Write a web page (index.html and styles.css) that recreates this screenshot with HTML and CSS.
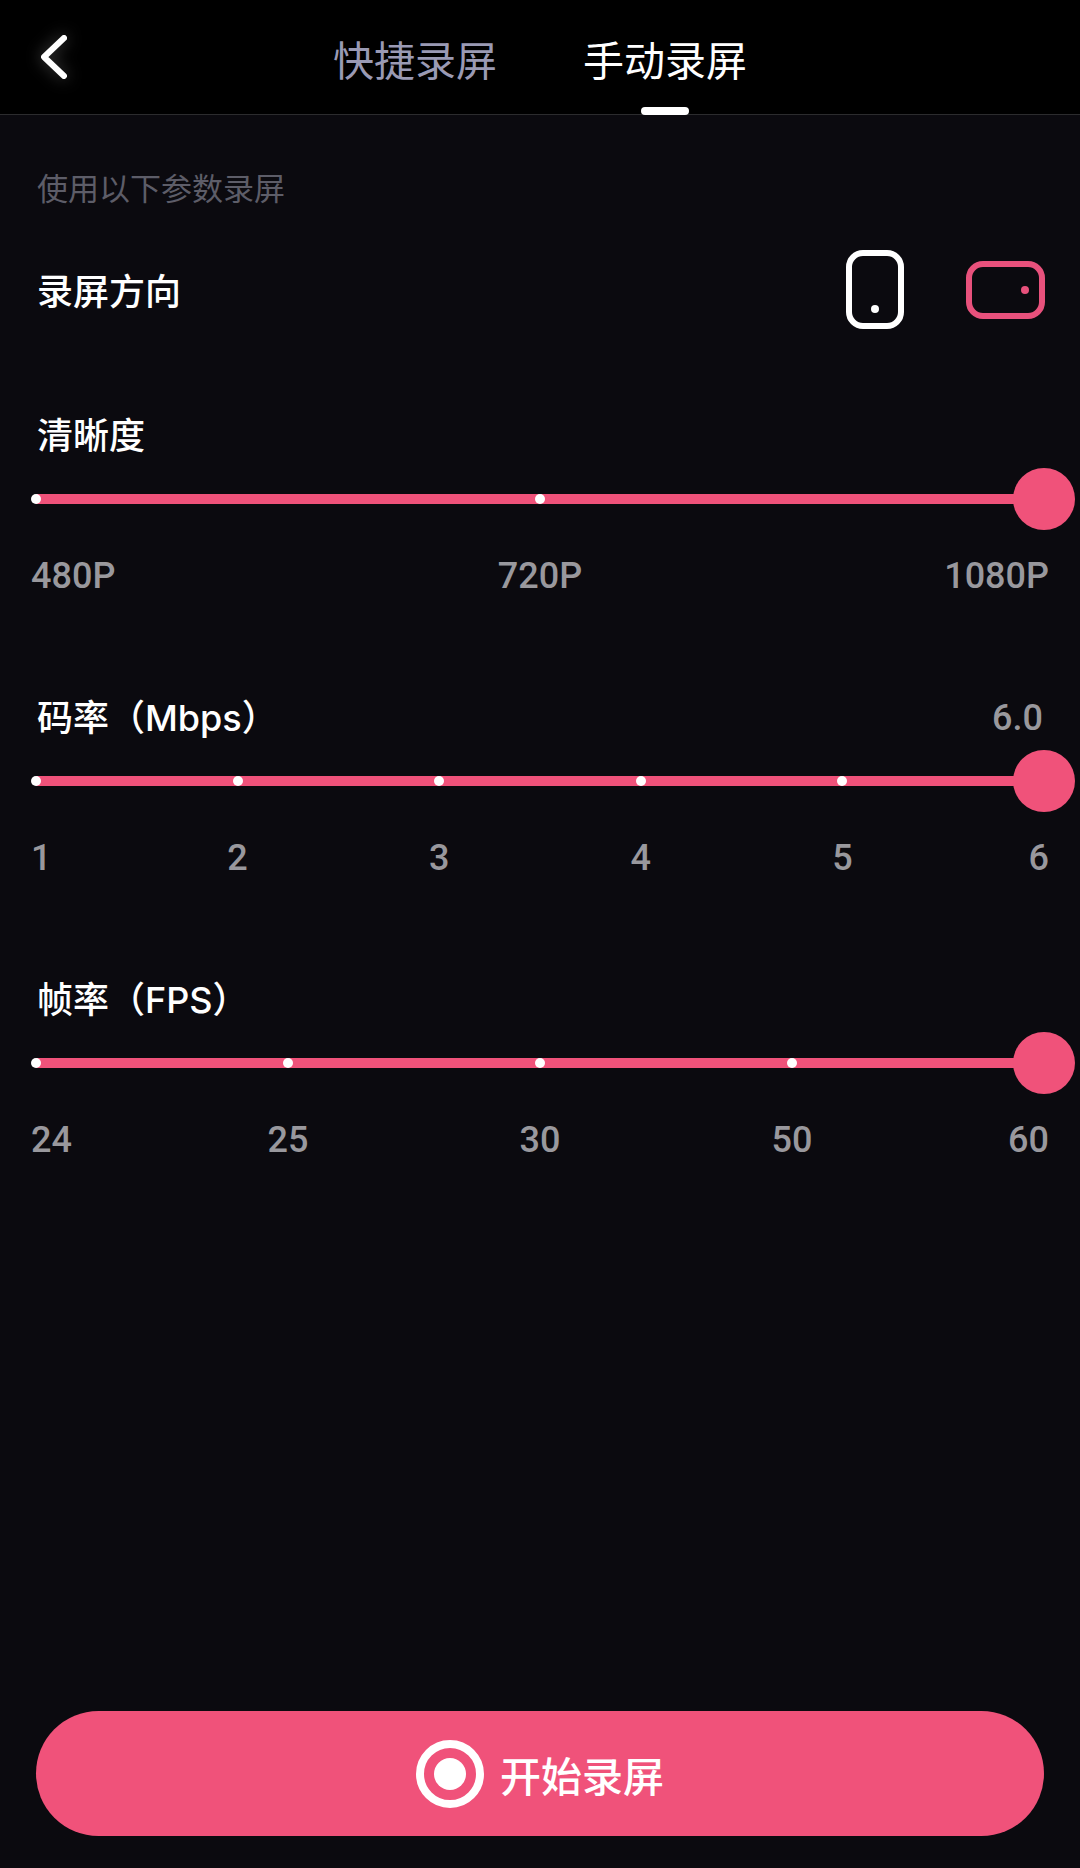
FILE: index.html
```html
<!DOCTYPE html>
<html lang="zh-CN">
<head>
    <meta charset="UTF-8">
    <meta name="viewport" content="width=device-width, initial-scale=1.0">
    <title>手动录屏</title>
    <link rel="stylesheet" href="styles.css">
</head>
<body>
    <header class="header">
        <button class="back" type="button" aria-label="返回">
            <svg width="32" height="48" viewBox="0 0 32 48" fill="none" stroke="#fff" stroke-width="6" stroke-linecap="round" stroke-linejoin="round">
                <path d="M28 5L8 24L28 43"/>
            </svg>
        </button>
        <nav class="tabs">
            <button class="tab" type="button">快捷录屏</button>
            <button class="tab active" type="button">手动录屏</button>
        </nav>
    </header>
    <main class="main">
        <p class="hint">使用以下参数录屏</p>
        <div class="direction">
            <span class="label">录屏方向</span>
            <div class="options" role="radiogroup" aria-label="录屏方向">
                <label class="option">
                    <input type="radio" name="direction" value="portrait" aria-label="竖屏">
                    <svg width="58" height="80" viewBox="0 0 58 80">
                        <rect x="3" y="3" width="52" height="73" rx="14" fill="none" stroke="currentColor" stroke-width="6"/>
                        <circle cx="29" cy="59" r="4" fill="currentColor"/>
                    </svg>
                </label>
                <label class="option">
                    <input type="radio" name="direction" value="landscape" aria-label="横屏" checked>
                    <svg width="80" height="58" viewBox="0 0 80 58">
                        <rect x="4" y="3" width="73" height="52" rx="14" fill="none" stroke="currentColor" stroke-width="6"/>
                        <circle cx="60" cy="29" r="4" fill="currentColor"/>
                    </svg>
                </label>
            </div>
        </div>

        <section class="setting">
            <div class="setting-head">
                <label class="label" for="quality">清晰度</label>
            </div>
            <div class="slider">
                <div class="track"><i></i><i></i><i></i></div>
                <input type="range" id="quality" min="0" max="2" step="1" value="2">
            </div>
            <div class="scale"><span>480P</span><span>720P</span><span>1080P</span></div>
        </section>

        <section class="setting">
            <div class="setting-head">
                <label class="label" for="bitrate">码率（Mbps）</label>
                <output class="value" id="bitrateValue" for="bitrate">6.0</output>
            </div>
            <div class="slider">
                <div class="track"><i></i><i></i><i></i><i></i><i></i><i></i></div>
                <input type="range" id="bitrate" min="1" max="6" step="0.1" value="6">
            </div>
            <div class="scale"><span>1</span><span>2</span><span>3</span><span>4</span><span>5</span><span>6</span></div>
        </section>

        <section class="setting">
            <div class="setting-head">
                <label class="label" for="fps">帧率（FPS）</label>
            </div>
            <div class="slider">
                <div class="track"><i></i><i></i><i></i><i></i><i></i></div>
                <input type="range" id="fps" min="0" max="4" step="1" value="4">
            </div>
            <div class="scale"><span>24</span><span>25</span><span>30</span><span>50</span><span>60</span></div>
        </section>
    </main>
    <footer class="footer">
        <button class="start" type="button">
            <svg width="68" height="68" viewBox="0 0 68 68">
                <circle cx="34" cy="34" r="30" fill="none" stroke="#fff" stroke-width="8"/>
                <circle cx="34" cy="34" r="16" fill="#fff"/>
            </svg>
            <span>开始录屏</span>
        </button>
    </footer>
    <script>
        const bitrate = document.getElementById('bitrate');
        const bitrateValue = document.getElementById('bitrateValue');
        bitrate.addEventListener('input', () => {
            bitrateValue.textContent = Number(bitrate.value).toFixed(1);
        });

        const tabs = document.querySelectorAll('.tab');
        tabs.forEach(tab => {
            tab.addEventListener('click', () => {
                tabs.forEach(t => t.classList.toggle('active', t === tab));
            });
        });
    </script>
</body>
</html>
```

FILE: styles.css
```css
* {
    box-sizing: border-box;
}
body {
    margin: 0;
    min-height: 100vh;
    display: flex;
    flex-direction: column;
    background: #0b0a0f;
    color: #fff;
    font-family: Inter, 'Noto Sans CJK SC', sans-serif;
}
button {
    padding: 0;
    border: none;
    background: none;
    color: inherit;
    font-family: inherit;
    cursor: pointer;
}
svg {
    display: block;
}
.header {
    display: grid;
    grid-template-columns: 1fr auto 1fr;
    height: 115px;
    padding: 0 36px;
    background: #000;
    border-bottom: 1px solid #2c2c2e;
}
.back {
    justify-self: start;
    align-self: center;
    filter: drop-shadow(0 0 8px rgba(255, 255, 255, 0.3));
}
.tabs {
    display: flex;
    gap: 86px;
}
.tab {
    position: relative;
    padding-top: 8px;
    color: #9a9ab4;
    font-size: 41px;
    line-height: 60px;
}
.tab.active {
    color: #fff;
}
.tab.active::after {
    content: '';
    position: absolute;
    left: 50%;
    bottom: -1px;
    width: 48px;
    height: 8px;
    margin-left: -24px;
    border-radius: 4px;
    background: #fff;
}
.main {
    padding: 50px 31px;
}
.hint {
    margin: 0;
    padding: 0 6px;
    color: #5d5d68;
    font-size: 31px;
    line-height: 48px;
}
.direction {
    display: flex;
    align-items: center;
    justify-content: space-between;
    margin: 37px 0 80px;
    padding: 0 4px 0 6px;
}
.label {
    padding-top: 4px;
    font-size: 36px;
    font-weight: 500;
    line-height: 44px;
}
.options {
    display: flex;
    align-items: center;
    gap: 61px;
}
.option {
    cursor: pointer;
}
.option input {
    position: absolute;
    opacity: 0;
}
.option input:checked + svg {
    color: #e8517c;
}
.setting {
    margin-bottom: 94px;
}
.setting-head {
    display: flex;
    align-items: flex-end;
    justify-content: space-between;
    padding: 0 6px;
}
.value,
.scale {
    color: #99989d;
    font-family: Roboto, sans-serif;
    font-size: 36px;
    font-weight: 500;
    line-height: 44px;
}
.slider {
    position: relative;
    display: flex;
    align-items: center;
    height: 62px;
    margin: 10px 0 24px;
}
.track {
    flex: 1;
    display: flex;
    justify-content: space-between;
    background: linear-gradient(#f0527a, #f0527a) center / calc(100% - 10px) 100% no-repeat;
}
.track i {
    width: 10px;
    height: 10px;
    border-radius: 50%;
    background: #fff;
}
/* 滑块两端各超出半个圆钮，使圆心对准刻度 */
.slider input {
    appearance: none;
    position: absolute;
    left: -26px;
    width: calc(100% + 52px);
    height: 62px;
    margin: 0;
    background: none;
    cursor: pointer;
}
.slider input::-webkit-slider-thumb {
    appearance: none;
    width: 62px;
    height: 62px;
    border-radius: 50%;
    background: #f0527a;
}
.slider input::-moz-range-thumb {
    width: 62px;
    height: 62px;
    border: none;
    border-radius: 50%;
    background: #f0527a;
}
.scale {
    display: flex;
    justify-content: space-between;
}
.scale span {
    display: flex;
    justify-content: center;
    width: 10px;
}
.scale span:first-child {
    justify-content: flex-start;
}
.scale span:last-child {
    justify-content: flex-end;
}
.footer {
    margin-top: auto;
    padding: 0 36px 32px;
}
.start {
    display: flex;
    align-items: center;
    justify-content: center;
    gap: 16px;
    width: 100%;
    height: 125px;
    border-radius: 63px;
    background: #f0527a;
    font-size: 41px;
    font-weight: 500;
}
```
